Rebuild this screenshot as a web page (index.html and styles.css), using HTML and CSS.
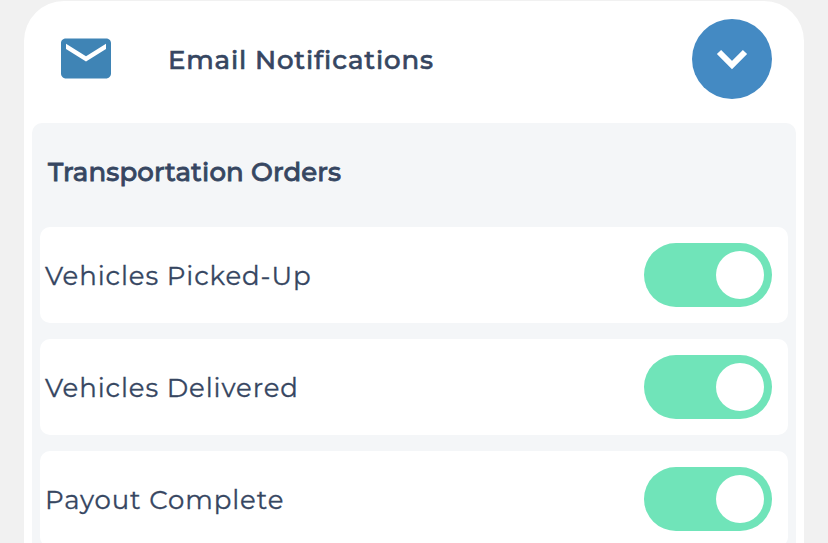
FILE: index.html
```html
<!DOCTYPE html>
<html lang="en">
<head>
    <meta charset="UTF-8">
    <meta name="viewport" content="width=device-width, initial-scale=1.0">
    <title>Email Notifications</title>
    <link rel="stylesheet" href="styles.css">
</head>
<body>
    <div class="card">
        <div class="card-header">
            <svg class="mail-icon" viewBox="2 4 20 16.4">
                <path d="M20 4.2H4c-1.1 0-2 .7-2 1.8v12.2c0 1.1.9 2 2 2h16c1.1 0 2-.9 2-2V6c0-1.1-.9-1.8-2-1.8zm0 4.2l-8 5-8-5V6.3l8 5 8-5z"/>
            </svg>
            <h2 class="card-title">Email Notifications</h2>
            <button type="button" class="collapse-btn" aria-label="Collapse">
                <svg viewBox="0 0 80 80">
                    <path d="M27 33l13 13 13-13"/>
                </svg>
            </button>
        </div>

        <div class="section">
            <h3 class="section-title">Transportation Orders</h3>
            <div class="option">
                <span class="option-label">Vehicles Picked-Up</span>
                <div class="toggle"><div class="knob"></div></div>
            </div>
            <div class="option">
                <span class="option-label">Vehicles Delivered</span>
                <div class="toggle"><div class="knob"></div></div>
            </div>
            <div class="option">
                <span class="option-label">Payout Complete</span>
                <div class="toggle"><div class="knob"></div></div>
            </div>
        </div>
    </div>
</body>
</html>
```

FILE: styles.css
```css
* {
    box-sizing: border-box;
}
body {
    margin: 0;
    padding: 1px 24px 0;
    height: 543px;
    overflow: hidden;
    background-color: #f1f1f1;
    color: #364661;
    font-family: Montserrat, Inter, sans-serif;
}
h2, h3 {
    margin: 0;
}
.card {
    height: 542px;
    padding: 0 8px;
    background-color: #fff;
    border-radius: 40px 40px 0 0;
    overflow: hidden;
}
.card-header {
    display: flex;
    align-items: center;
    height: 122px;
    padding: 0 24px 6px 29px;
}
.mail-icon {
    width: 50px;
    height: 41px;
    margin-bottom: 1px;
    fill: #3f84b5;
}
.card-title {
    flex: 1;
    margin-left: 57px;
    padding-top: 2px;
    font-size: 26px;
    font-weight: 500;
    letter-spacing: 0.85px;
    white-space: nowrap;
    -webkit-text-stroke: 0.6px #364661;
}
.collapse-btn {
    width: 80px;
    height: 80px;
    padding: 0;
    border: none;
    border-radius: 50%;
    background-color: #448ac3;
    cursor: pointer;
}
.collapse-btn svg {
    display: block;
    fill: none;
    stroke: #fff;
    stroke-width: 6;
}
.section {
    height: 600px;
    padding: 0 8px;
    background-color: #f4f6f8;
    border-radius: 10px;
}
.section-title {
    height: 104px;
    padding-left: 8px;
    font-size: 26px;
    font-weight: 500;
    line-height: 99px;
    letter-spacing: 0.13px;
    -webkit-text-stroke: 0.8px #364661;
}
.option {
    display: flex;
    align-items: center;
    justify-content: space-between;
    height: 96px;
    margin-bottom: 16px;
    padding: 0 16px 0 5px;
    background-color: #fff;
    border-radius: 10px;
}
.option-label {
    padding-top: 2px;
    font-size: 26px;
    letter-spacing: 0.9px;
    -webkit-text-stroke: 0.3px #364661;
}
.toggle {
    display: flex;
    justify-content: flex-end;
    width: 128px;
    height: 64px;
    padding: 8px;
    background-color: #70e4b9;
    border-radius: 32px;
}
.knob {
    width: 48px;
    height: 48px;
    background-color: #fff;
    border-radius: 50%;
}
```
